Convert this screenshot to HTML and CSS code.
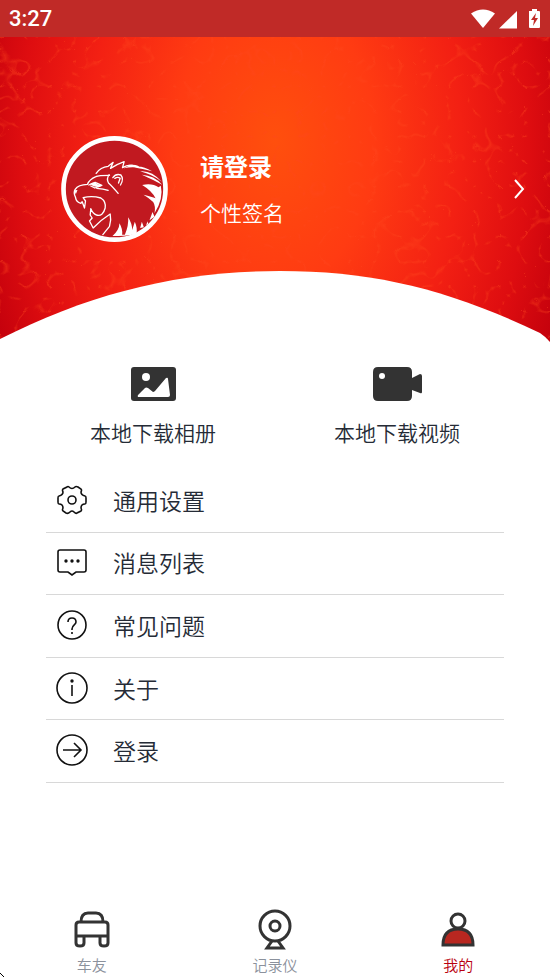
FILE: index.html
```
<!DOCTYPE html>
<html lang="zh-CN">
<head>
  <meta charset="UTF-8">
  <meta name="viewport" content="width=device-width, initial-scale=1">
  <title>我的</title>
  <link rel="stylesheet" href="styles.css">
</head>
<body>
  <div class="status">
    <span>3:27</span>
    <svg width="69" height="20" viewBox="0 0 69 20" fill="#fff">
      <path d="M0 4.500Q12-3.500 24 4.500L12 19z"/>
      <path d="M28 19.500L46 2V19.500z"/>
      <path d="M58 2H61V0H66V2H68Q69 2 69 3V18Q69 19 68 19H59Q58 19 58 18z"/>
      <path d="M65 4L60 11H63L62 17L67 9H64z" fill="#c02a27"/>
    </svg>
  </div>

  <header class="hero">
    <svg class="texture" width="100%" height="100%">
      <filter id="veins" x="0" y="0" width="100%" height="100%" color-interpolation-filters="sRGB">
        <feTurbulence type="turbulence" baseFrequency="0.04" numOctaves="2" seed="8"/>
        <feColorMatrix values="0 0 0 0 1  0 0 0 0 .28  0 0 0 0 .12  -9 0 0 0 1"/>
      </filter>
      <rect width="100%" height="100%" filter="url(#veins)"/>
    </svg>
    <a class="profile" href="#login">
      <svg class="avatar" viewBox="33 33 320 318">
        <ellipse cx="193" cy="192" rx="153" ry="152" fill="#c11920" stroke="#fff" stroke-width="14"/>
        <g fill="none" stroke="#fff" stroke-width="4" stroke-linecap="round" stroke-linejoin="round">
          <path d="M178 151Q145 151 137 155Q118 163 112 178Q84 179 75 193Q69 202 76 217Q78 231 92 235L96 230L103 249L106 228L99 218Q125 211 152 219Q168 229 165 249Q158 276 139 270Q128 266 122 251L120 270L126 279L118 288L129 309Q153 284 180 267Q184 286 178 304L158 329"/>
          <path d="M138 145Q151 126 174 124L189 112L181 130Q202 117 222 110L217 128Q237 116 253 124"/>
          <path d="M177 149Q168 161 175 174Q185 183 204 205M188 158Q197 145 212 150Q222 162 211 180M194 160Q203 154 210 160L205 174"/>
          <path d="M116 180L135 172L155 181L134 189L122 183M140 190Q160 192 174 196"/>
        </g>
        <g fill="#fff">
          <path d="M220 130L244 119Q265 118 274 131Q252 123 220 130zM248 127Q273 119 306 139Q278 131 248 127zM270 139Q303 135 335 170Q308 149 270 139zM275 149Q312 151 336 179Q309 164 275 149z"/>
          <path d="M276 180Q307 174 325 187L332 182Q341 220 313 265Q317 243 309 231Q297 219 280 209Q306 215 316 220Q306 198 276 180z"/>
          <path d="M187 333Q207 316 208 295Q218 313 216 329L224 329Q236 302 234 277Q246 296 246 315L254 290Q262 309 259 325Q241 335 187 333zM270 309L275 290L281 307zM288 301L292 289L294 297zM298 286L307 261L313 275z"/>
          <path d="M72 196L82 195L77 208zM120 176Q133 168 142 178L157 181L146 187L129 184z"/>
        </g>
      </svg>
      <span class="who">
        <strong>请登录</strong>
        <span>个性签名</span>
      </span>
      <svg width="12" height="22" viewBox="0 0 12 22" fill="none" stroke="#fff" stroke-width="2"><path d="M2 2L10 11L2 20"/></svg>
    </a>
    <svg class="curve" viewBox="0 0 550 73" preserveAspectRatio="none">
      <path d="M0 69C90 23 180 1 280 1C375 1 450 20 540 63Q546 67 550 72V73H0z" fill="#fff"/>
    </svg>
  </header>

  <main>
    <div class="downloads">
      <a href="#photos">
        <svg width="45" height="34" viewBox="0 0 45 34">
          <rect width="45" height="34" rx="3" fill="#333"/>
          <circle cx="15" cy="10" r="4" fill="#fff"/>
          <path d="M7 28L14 21Q15 20 17 21L22 25Q23 25 24 24L35 11Q37 10 37 12L39 28Q39 30 37 30H8Q6 30 7 28z" fill="#fff"/>
        </svg>
        本地下载相册
      </a>
      <a href="#videos">
        <svg width="49" height="34" viewBox="0 0 49 34">
          <path d="M5 0H34Q39 0 39 5V11L47 7Q49 7 49 9V25Q49 27 47 26L39 23V29Q39 34 34 34H5Q0 34 0 29V5Q0 0 5 0z" fill="#333"/>
          <circle cx="9" cy="9" r="3" fill="#fff"/>
        </svg>
        本地下载视频
      </a>
    </div>

    <nav class="menu">
      <a href="#settings">
        <svg viewBox="0 0 32 32"><path d="M11 3Q12 2 13 3Q16 6 19 3Q20 2 22 3L25 5Q26 6 25 8Q25 11 29 12Q30 12 30 14V18Q30 20 29 20Q25 20 25 24Q26 26 25 27L21 29Q20 30 18 28Q16 26 14 28Q12 30 10 29L7 27Q6 26 7 24Q7 20 3 20Q2 20 2 18V14Q2 12 3 12Q7 11 7 8Q6 6 7 5z"/><circle cx="16" cy="16" r="4"/></svg>
        通用设置
      </a>
      <a href="#messages">
        <svg viewBox="0 0 32 32"><path d="M4 4H28Q30 4 30 6V24Q30 26 28 26H20L16 29L12 26H4Q2 26 2 24V6Q2 4 4 4z"/><path class="dots" d="M10 15h0M16 15h0M22 15h0"/></svg>
        消息列表
      </a>
      <a href="#faq">
        <svg viewBox="0 0 32 32"><circle cx="16" cy="16" r="14"/><path d="M12 13Q12 9 16 9T20 13C20 16 16 16 16 20V21M16 23V25"/></svg>
        常见问题
      </a>
      <a href="#about">
        <svg viewBox="0 0 32 32"><circle cx="16" cy="16" r="15"/><path d="M16 13V24"/><path class="dots" d="M16 9h0"/></svg>
        关于
      </a>
      <a href="#login">
        <svg viewBox="0 0 32 32"><circle cx="16" cy="16" r="15"/><path d="M7 16H25M18 9L25 16L18 23"/></svg>
        登录
      </a>
    </nav>
  </main>

  <nav class="tabs">
    <a href="#friends">
      <svg viewBox="0 0 40 42"><path d="M9 13Q9 4 16 4H24Q31 4 31 13M7 13H33Q36 13 36 16V34Q36 37 32 37Q28 37 28 34V27M4 27H36M12 27V34Q12 37 8 37Q4 37 4 34V16Q4 13 7 13"/></svg>
      车友
    </a>
    <a href="#recorder">
      <svg viewBox="0 0 40 42"><circle cx="20" cy="17" r="15"/><circle cx="20" cy="17" r="5"/><path d="M17 32L12 39H28L23 32"/></svg>
      记录仪
    </a>
    <a class="active" href="#me">
      <svg viewBox="0 0 40 42"><circle cx="20" cy="12" r="7"/><path d="M5 36Q5 20 20 20T35 36z" fill="#b82720"/></svg>
      我的
    </a>
  </nav>
  <svg class="corner" width="4" height="4" viewBox="0 0 4 4"><path d="M0 0L4 4" stroke="#000"/></svg>
</body>
</html>
```
FILE: styles.css
```
* {
  box-sizing: border-box;
}

body {
  margin: 0;
  min-height: 100vh;
  display: flex;
  flex-direction: column;
  background: #fff;
  color: #252b36;
  font-family: "Noto Sans CJK SC", sans-serif;
  font-weight: 350;
}

a {
  color: inherit;
  text-decoration: none;
}

.status {
  height: 37px;
  padding: 0 10px 0 9px;
  display: flex;
  align-items: center;
  justify-content: space-between;
  background: #c02a27;
  color: #fff;
  font: 500 22px Roboto, sans-serif;
}

.hero {
  position: relative;
  height: 306px;
  background: radial-gradient(ellipse 310px 460px at 50% 34%, #ff4f0d 0%, #ff3b12 32%, #f32013 60%, #de0d10 82%, #c2000c 100%);
}

.texture {
  position: absolute;
  inset: 0;
  opacity: 0.4;
}

.curve {
  position: absolute;
  left: 0;
  bottom: 0;
  width: 100%;
  height: 73px;
}

.profile {
  position: relative;
  display: flex;
  align-items: center;
  padding: 99px 25px 0 61px;
  color: #fff;
}

.avatar {
  width: 107px;
  height: 106px;
}

.who {
  flex: 1;
  margin-left: 32px;
  display: flex;
  flex-direction: column;
  gap: 14px;
  font-size: 21px;
  line-height: 32px;
}

.who strong {
  font-size: 24px;
  font-weight: 700;
}

.downloads {
  display: grid;
  grid-template-columns: 1fr 1fr;
  padding: 24px 31px 0;
  font-size: 21px;
  line-height: 32px;
}

.downloads a {
  display: flex;
  flex-direction: column;
  align-items: center;
  gap: 15px;
}

.menu {
  margin: 22px 46px 0;
  min-height: 313px;
  display: grid;
  grid-auto-rows: 1fr;
  font-size: 23px;
}

.menu a {
  display: flex;
  align-items: center;
  gap: 25px;
  padding: 0 0 2px 10px;
  border-bottom: 1px solid #d8d8d8;
}

.menu svg {
  width: 32px;
  height: 32px;
  fill: none;
  stroke: #111;
  stroke-width: 1.6;
}

.menu .dots {
  stroke-width: 3.4;
  stroke-linecap: round;
}

.tabs {
  margin-top: auto;
  display: grid;
  grid-template-columns: 1fr 1fr 1fr;
  color: #8b919c;
  font-size: 15px;
  line-height: 24px;
}

.tabs a {
  display: flex;
  flex-direction: column;
  align-items: center;
  gap: 2px;
}

.tabs svg {
  width: 40px;
  height: 42px;
  fill: none;
  stroke: #333;
  stroke-width: 3;
}

.tabs .active {
  color: #b9000f;
}

.corner {
  position: fixed;
  left: 0;
  bottom: 0;
}
```
